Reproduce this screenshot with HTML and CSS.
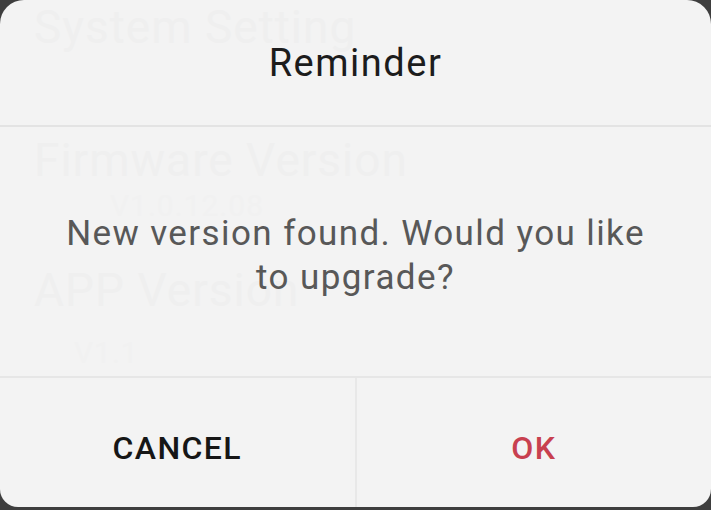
FILE: index.html
```html
<!DOCTYPE html>
<html>
<head>
<meta charset="utf-8">
<link rel="stylesheet" href="styles.css">
</head>
<body>
<div class="dialog">
  <div class="ghost" aria-hidden="true">
    <div class="ghost-line g1">System Setting</div>
    <div class="ghost-line g2">Firmware Version</div>
    <div class="ghost-line g3">V1.0.12.08</div>
    <div class="ghost-line g4">APP Version</div>
    <div class="ghost-line g5">V1.1</div>
  </div>
  <div class="title">Reminder</div>
  <div class="message">New version found. Would you like<br>to upgrade?</div>
  <div class="actions">
    <div class="btn cancel">CANCEL</div>
    <div class="btn ok">OK</div>
  </div>
</div>
</body>
</html>
```

FILE: styles.css
```css
html, body {
  margin: 0;
  padding: 0;
  width: 711px;
  height: 510px;
  overflow: hidden;
  background: #3e3e3e;
  font-family: Roboto, "Noto Sans", "Liberation Sans", sans-serif;
}
.dialog {
  position: relative;
  width: 711px;
  height: 507px;
  background: #f3f3f3;
  border-radius: 24px 24px 18px 18px;
  display: flex;
  flex-direction: column;
  overflow: hidden;
}
.ghost {
  position: absolute;
  inset: 0;
  z-index: 0;
  padding: 4px 0 0 34px;
  color: #efefef;
  font-size: 46px;
  line-height: 1;
  letter-spacing: 1px;
}
.ghost-line { white-space: nowrap; }
.g2 { margin-top: 87px; }
.g3 { margin-top: 8px; margin-left: 76px; font-size: 30px; color: #f1f1f1; }
.g4 { margin-top: 46px; }
.g5 { margin-top: 25px; margin-left: 40px; font-size: 30px; color: #f1f1f1; }
.title, .message, .actions { position: relative; z-index: 1; }
.title {
  height: 127px;
  box-sizing: border-box;
  display: flex;
  align-items: center;
  justify-content: center;
  font-size: 38px;
  letter-spacing: 1.5px;
  color: #1c1c1c;
  border-bottom: 2px solid #e3e3e3;
}
.message {
  height: 251px;
  box-sizing: border-box;
  border-bottom: 2px solid #e6e6e6;
  display: flex;
  align-items: center;
  justify-content: center;
  text-align: center;
  font-size: 35px;
  letter-spacing: 1.4px;
  line-height: 43.5px;
  color: #585858;
  padding-top: 8px;
}
.actions {
  flex: 1;
  display: flex;
}
.btn {
  flex: 1;
  display: flex;
  align-items: center;
  justify-content: center;
  font-size: 32px;
  letter-spacing: 1.4px;
  font-weight: 500;
  padding-top: 18px;
  padding-bottom: 8px;
}
.cancel {
  color: #161616;
  border-right: 2px solid #e8e8e8;
}
.ok { color: #c8404f; }
```
